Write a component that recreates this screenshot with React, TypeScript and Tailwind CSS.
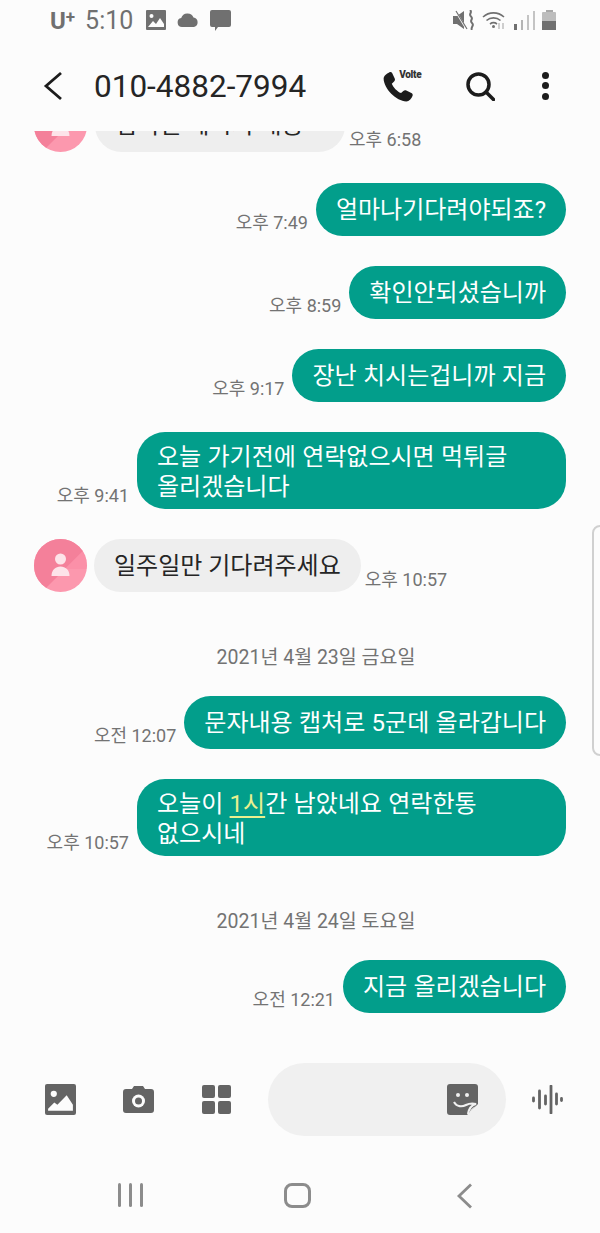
import type { ReactNode } from "react";

function Sent({ time, children, wide }: { time: string; children: ReactNode; wide?: boolean }) {
  return (
    <div className="flex items-end justify-end pr-[34px]">
      <span className="mr-[8px] mb-[2px] text-[18px] leading-[22px] text-[#737373]">{time}</span>
      <div
        className={
          wide
            ? "w-[429px] h-[77px] rounded-[28px] bg-[#029e8b] pl-[20px] pt-[10px] text-[24px] leading-[30px] text-white [word-spacing:0.4px]"
            : "h-[53px] rounded-[27px] bg-[#029e8b] px-[20px] text-[24px] leading-[54px] text-white whitespace-nowrap [word-spacing:0.4px]"
        }
      >
        {children}
      </div>
    </div>
  );
}

function DateLine({ children }: { children: string }) {
  return <div className="pl-[32px] text-center text-[19.5px] leading-[24px] text-[#737373]">{children}</div>;
}

function Avatar() {
  return (
    <div className="relative w-[53px] h-[53px] shrink-0 overflow-hidden rounded-full bg-[#fc98ae]">
      <svg viewBox="0 0 53 53" className="absolute inset-0 w-full h-full">
        <path d="M0 0H53V8L8 53H0Z" fill="#f4809a" />
        <path d="M53 8V30H30L8 53Z" fill="#fa8aa3" opacity="0.6" />
        <circle cx="26.500" cy="20" r="5.500" fill="#fde3e9" />
        <path d="M17.500 37c0-6 4-9.500 9-9.500s9 3.500 9 9.500Z" fill="#fde3e9" />
      </svg>
    </div>
  );
}

export default function App() {
  return (
    <div className="relative w-[600px] h-[1233px] overflow-hidden flex flex-col bg-[#fcfcfc] font-['Roboto','Noto_Sans_CJK_KR',sans-serif]">
      {/* status bar */}
      <div className="h-[40px] shrink-0 flex items-center pl-[50px] pr-[44px] text-[#707070]">
        <span className="text-[24px] font-bold leading-none mt-[2px]">
          U<span className="text-[17px] align-[6px] leading-none">+</span>
        </span>
        <span className="ml-[10px] text-[25px] leading-none mt-[1px]">5:10</span>
        <svg viewBox="0 0 20 20" className="ml-[13px] w-[20px] h-[20px]" fill="currentColor">
          <path d="M1 0h18a1 1 0 0 1 1 1v18a1 1 0 0 1-1 1H1a1 1 0 0 1-1-1V1a1 1 0 0 1 1-1Z" />
          <circle cx="5.500" cy="6" r="2" fill="#fcfcfc" />
          <path d="M2 17l5-6 3 3 4-6 4 6v3Z" fill="#fcfcfc" />
        </svg>
        <svg viewBox="0 0 22 14" className="ml-[11px] w-[22px] h-[14px]" fill="currentColor">
          <path d="M5 14a4.500 4.500 0 0 1-.8-8.900A6.500 6.500 0 0 1 16.500 4.600 4.800 4.800 0 0 1 17 14Z" />
        </svg>
        <svg viewBox="0 0 21 21" className="ml-[11px] w-[21px] h-[21px]" fill="currentColor">
          <path d="M2 0h17a2 2 0 0 1 2 2v13a2 2 0 0 1-2 2H8l-3 4v-4H2a2 2 0 0 1-2-2V2a2 2 0 0 1 2-2Z" />
        </svg>
        <div className="flex-1" />
        <svg viewBox="0 0 21 20" className="w-[21px] h-[20px]" fill="currentColor">
          <path d="M0 6h4l7-5v18l-7-5H0Z" />
          <path d="M2 0l12 20" stroke="#fcfcfc" strokeWidth="1.800" />
          <path d="M3 1l11 18" stroke="currentColor" strokeWidth="1.200" />
          <path d="M17 0c3 2.500-2 4 1 6.500s-2 4 1 6.500-2 4 0 7" fill="none" stroke="currentColor" strokeWidth="2" />
        </svg>
        <svg viewBox="0 0 23 19" className="ml-[8px] w-[23px] h-[19px]" fill="none" stroke="currentColor">
          <path d="M1 6C7 .5 16 .5 22 6" strokeWidth="1.600" />
          <path d="M4.500 9.500C8.500 6 14.500 6 18.500 9.500" strokeWidth="1.600" />
          <path d="M8 13c2-1.500 5-1.500 7 0" strokeWidth="1.600" />
          <circle cx="11.500" cy="15.500" r="1.500" fill="currentColor" stroke="none" />
          <path d="M17 12v6M21 18v-6" strokeWidth="1.200" stroke="#b0b0b0" />
        </svg>
        <div className="ml-[9px] flex items-end gap-[4px] h-[20px]">
          <div className="w-[3px] h-[6px] bg-[#707070]" />
          <div className="w-[2px] h-[10px] bg-[#b5b5b5]" />
          <div className="w-[2px] h-[15px] bg-[#c4c4c4]" />
          <div className="w-[2px] h-[19px] bg-[#c4c4c4]" />
        </div>
        <div className="ml-[7px] flex flex-col items-center">
          <div className="w-[7px] h-[2px] bg-[#a8a8a8]" />
          <div className="w-[14px] h-[18px] rounded-[1px] bg-[#bdbdbd] flex flex-col justify-end">
            <div className="h-[9px] bg-[#707070]" />
          </div>
        </div>
      </div>

      {/* header */}
      <div className="h-[91px] shrink-0 flex items-center text-[#252525]">
        <svg viewBox="0 0 20 30" className="ml-[43px] w-[20px] h-[30px]" fill="none" stroke="#1c1c1c" strokeWidth="2.800">
          <path d="M18 2L3 15l15 13" />
        </svg>
        <span className="ml-[31px] mt-[3px] text-[31.500px] leading-none">010-4882-7994</span>
        <div className="relative ml-[76px] w-[40px] h-[40px]">
          <svg viewBox="0 0 24 24" className="absolute left-[-3px] top-[3px] w-[37px] h-[37px]" fill="#1c1c1c">
            <path d="M6.600 2.200c.8-.4 1.600-.2 2 .6l1.600 3.400c.3.700.2 1.400-.4 1.900L8.300 9.500c.9 2.300 3.400 5 6 6.100l1.500-1.400c.5-.5 1.200-.6 1.900-.3l3.300 1.600c.8.400 1.100 1.200.7 2-.7 1.600-2 3.500-4 3.500C11.300 21 3 12.700 3 6.200c0-1.700 2-3.300 3.600-4Z" />
          </svg>
          <span className="absolute left-[17px] top-[4px] text-[10px] font-black leading-none tracking-[-0.3px] text-[#333]">
            Volte
          </span>
        </div>
        <svg viewBox="0 0 29 29" className="ml-[44px] mt-[1px] w-[29px] h-[29px]" fill="none" stroke="#1c1c1c" strokeWidth="3.500">
          <circle cx="12.500" cy="12.500" r="10.500" />
          <path d="M20 20l7.500 7.500" strokeLinecap="round" />
        </svg>
        <div className="ml-[47px] flex flex-col gap-[3.500px]">
          <div className="w-[7px] h-[7px] rounded-full bg-[#1c1c1c]" />
          <div className="w-[7px] h-[7px] rounded-full bg-[#1c1c1c]" />
          <div className="w-[7px] h-[7px] rounded-full bg-[#1c1c1c]" />
        </div>
      </div>

      {/* messages */}
      <div className="flex-1 overflow-hidden">
        <div className="flex items-end pl-[34px] -mt-[32px] h-[53px]">
          <Avatar />
          <div className="ml-[8px] w-[250px] h-[53px] rounded-[27px] bg-[#eeeeee] pl-[20px] text-[24px] leading-[52px] text-[#252525] whitespace-nowrap">
            입력된 메시지 내용
          </div>
          <span className="ml-[4px] mb-[1px] text-[18px] leading-[22px] text-[#737373]">오후 6:58</span>
        </div>
        <div className="mt-[31px] flex flex-col gap-[30px]">
          <Sent time="오후 7:49">얼마나기다려야되죠?</Sent>
          <Sent time="오후 8:59">확인안되셨습니까</Sent>
          <Sent time="오후 9:17">장난 치시는겁니까 지금</Sent>
          <Sent time="오후 9:41" wide>
            오늘 가기전에 연락없으시면 먹튀글
            <br />
            올리겠습니다
          </Sent>
        </div>
        <div className="mt-[30px] flex items-end pl-[34px]">
          <Avatar />
          <div className="ml-[7px] h-[53px] rounded-[27px] bg-[#eeeeee] px-[20px] text-[24px] leading-[54px] text-[#252525] whitespace-nowrap">
            일주일만 기다려주세요
          </div>
          <span className="ml-[4px] mb-[1px] text-[18px] leading-[22px] text-[#737373]">오후 10:57</span>
        </div>
        <div className="mt-[54px]">
          <DateLine>2021년 4월 23일 금요일</DateLine>
        </div>
        <div className="mt-[26px] flex flex-col gap-[30px]">
          <Sent time="오전 12:07">문자내용 캡처로 5군데 올라갑니다</Sent>
          <Sent time="오후 10:57" wide>
            오늘이 <span className="text-[#e9f08f] underline underline-offset-[4px]">1시</span>간 남았네요 연락한통
            <br />
            없으시네
          </Sent>
        </div>
        <div className="mt-[54px]">
          <DateLine>2021년 4월 24일 토요일</DateLine>
        </div>
        <div className="mt-[26px]">
          <Sent time="오전 12:21">지금 올리겠습니다</Sent>
        </div>
      </div>

      {/* input row */}
      <div className="h-[73px] shrink-0 flex items-center text-[#646464]">
        <svg viewBox="0 0 30 30" className="ml-[45px] w-[31px] h-[31px]" fill="currentColor">
          <path d="M2 0h26a2 2 0 0 1 2 2v26a2 2 0 0 1-2 2H2a2 2 0 0 1-2-2V2a2 2 0 0 1 2-2Z" />
          <circle cx="8.500" cy="9.500" r="3" fill="#fcfcfc" />
          <path d="M3 26v-2l6-6 3 2 9-9 6 9v6Z" fill="#fcfcfc" />
        </svg>
        <svg viewBox="0 0 31 27" className="ml-[47px] w-[31px] h-[27px]" fill="currentColor">
          <path d="M3 3h6l2-3h9l2 3h6a3 3 0 0 1 3 3v18a3 3 0 0 1-3 3H3a3 3 0 0 1-3-3V6a3 3 0 0 1 3-3Z" />
          <circle cx="15.500" cy="15" r="6.500" fill="#fcfcfc" />
          <circle cx="15.500" cy="15" r="3.500" />
        </svg>
        <div className="ml-[48px] grid grid-cols-2 gap-[3px] w-[29px]">
          <div className="h-[13px] rounded-[2px] bg-[#646464]" />
          <div className="h-[13px] rounded-[2px] bg-[#646464]" />
          <div className="h-[13px] rounded-[2px] bg-[#646464]" />
          <div className="h-[13px] rounded-[2px] bg-[#646464]" />
        </div>
        <div className="ml-[37px] w-[238px] h-[73px] rounded-full bg-[#f0f0f0] flex items-center justify-end pr-[28px]">
          <svg viewBox="0 0 31 31" className="w-[31px] h-[31px]" fill="currentColor">
            <path d="M3 0h25a3 3 0 0 1 3 3v17L20 31H3a3 3 0 0 1-3-3V3a3 3 0 0 1 3-3Z" />
            <circle cx="11" cy="11" r="2" fill="#f0f0f0" />
            <circle cx="20" cy="11" r="2" fill="#f0f0f0" />
            <path d="M7 18c3 5 8 5 12 3 3-1.500 6-2 10-1-4 1-7 4-8 10" fill="none" stroke="#f0f0f0" strokeWidth="2.200" />
            <path d="M22 30c1-4 3-6 7-8Z" fill="#f0f0f0" />
          </svg>
        </div>
        <svg viewBox="0 0 31 29" className="ml-[25px] w-[32px] h-[29px]" fill="none" stroke="currentColor" strokeWidth="2.800" strokeLinecap="round">
          <path d="M2 13v3M8 6v17M14 11v8M19.500 1v27M25 9v10M30 13.500v2" />
        </svg>
      </div>

      {/* nav bar */}
      <div className="h-[97px] shrink-0 flex items-start">
        <div className="ml-[118px] mt-[47px] flex gap-[8px]">
          <div className="w-[3px] h-[24px] rounded-full bg-[#8c8c8c]" />
          <div className="w-[3px] h-[24px] rounded-full bg-[#8c8c8c]" />
          <div className="w-[3px] h-[24px] rounded-full bg-[#8c8c8c]" />
        </div>
        <div className="ml-[141px] mt-[47px] w-[27px] h-[25px] rounded-[8px] border-[3px] border-[#8c8c8c]" />
        <svg viewBox="0 0 16 26" className="ml-[145px] mt-[47px] w-[16px] h-[26px]" fill="none" stroke="#8c8c8c" strokeWidth="2.800">
          <path d="M15 1.500L3 13l12 11.500" />
        </svg>
      </div>

      {/* edge panel handle */}
      <div className="absolute right-[-12px] top-[525px] w-[20px] h-[231px] rounded-[8px] border-2 border-[#d0d0d0]" />
    </div>
  );
}
